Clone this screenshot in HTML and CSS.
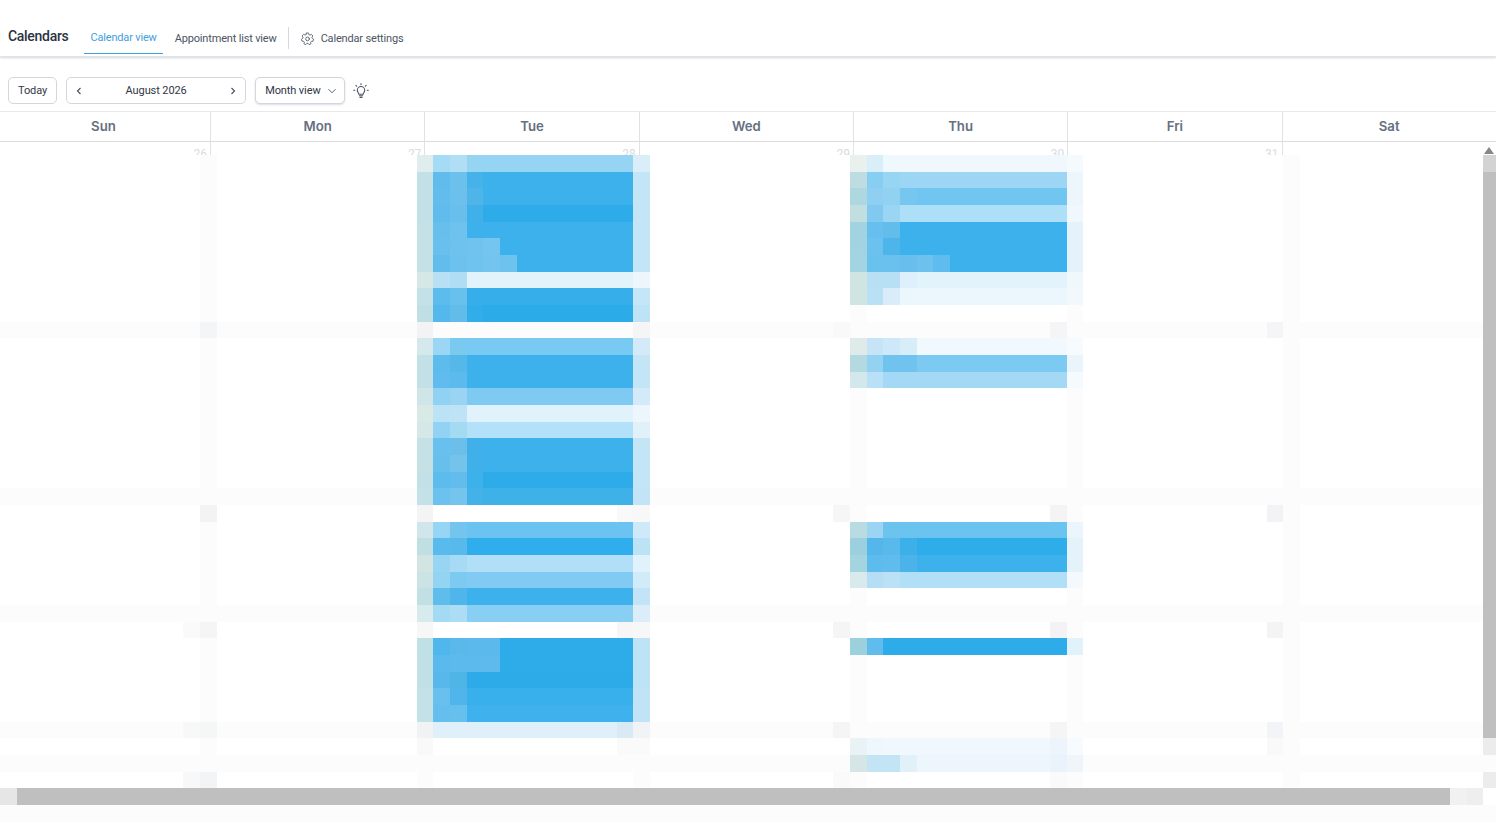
FILE: index.html
```html
<!DOCTYPE html>
<html lang="en">
<head>
    <meta charset="UTF-8" />
    <title>Calendars</title>
    <link rel="stylesheet" href="styles.css">
</head>
<body>
    <header class="topbar">
        <h1 class="page-title">Calendars</h1>
        <nav class="tabs">
            <a class="tab tab-active" href="#">Calendar view</a>
            <a class="tab" href="#">Appointment list view</a>
            <span class="tab-divider"></span>
            <a class="tab tab-settings" href="#">
                <svg class="gear" width="15" height="15" viewBox="0 0 24 24" fill="none" stroke="#5f6773" stroke-width="1.5" stroke-linecap="round" stroke-linejoin="round">
                    <path d="M10.3 3.2h3.4l.5 2.6 1.7.8 2.3-1.3 2.3 2.6-1.4 2.1.4 1.9 2.2 1.3-.9 3.2-2.6.1-1.2 1.5.5 2.5-3.1 1.3-1.5-2.1h-1.9l-1.7 2.1-3-1.4.6-2.5-1.2-1.5-2.6-.1-.9-3.2 2.2-1.3.4-1.9-1.4-2.1 2.3-2.6 2.3 1.3 1.7-.8z" />
                    <circle cx="12" cy="12.6" r="3" />
                </svg>
                Calendar settings
            </a>
        </nav>
    </header>

    <div class="toolbar">
        <button class="btn">Today</button>
        <div class="btn month-nav">
            <svg width="10" height="10" viewBox="0 0 10 10" fill="none" stroke="#4b5563" stroke-width="1.2"><path d="M6.5 2 3.5 5l3 3" /></svg>
            <span>August 2026</span>
            <svg width="10" height="10" viewBox="0 0 10 10" fill="none" stroke="#4b5563" stroke-width="1.2"><path d="M3.5 2l3 3-3 3" /></svg>
        </div>
        <button class="btn view-select">
            Month view
            <svg width="10" height="10" viewBox="0 0 10 10" fill="none" stroke="#5f6773" stroke-width="1"><path d="M1.5 3.2 5 6.8l3.5-3.6" /></svg>
        </button>
        <svg class="bulb" width="16" height="16" viewBox="0 0 16 16" fill="none" stroke="#4b5563" stroke-width="1.1" stroke-linecap="round">
            <path d="M5.9 11.2c0-1.3-1.6-1.9-1.6-4a3.7 3.7 0 0 1 7.4 0c0 2.1-1.6 2.7-1.6 4z" />
            <path d="M6.3 12.8h3.4M7 14.4h2" />
            <path d="M8 .6v1M2.9 2.4l.7.7M13.1 2.4l-.7.7M.7 7.2h1.1M14.2 7.2h1.1" />
        </svg>
    </div>

    <div class="calendar">
        <div class="week-head">
            <div class="day-name">Sun</div>
            <div class="day-name">Mon</div>
            <div class="day-name">Tue</div>
            <div class="day-name">Wed</div>
            <div class="day-name">Thu</div>
            <div class="day-name">Fri</div>
            <div class="day-name">Sat</div>
        </div>
        <div class="month-body">
            <div class="week-row">
                <div class="day-cell">26</div>
                <div class="day-cell">27</div>
                <div class="day-cell">28</div>
                <div class="day-cell">29</div>
                <div class="day-cell">30</div>
                <div class="day-cell">31</div>
                <div class="day-cell"></div>
            </div>
            <!-- blurred part of the page, filled by mosaic.js -->
            <div id="mosaic" class="mosaic"></div>
            <span class="scroll-up"></span>
        </div>
    </div>

    <script src="mosaic.js"></script>
</body>
</html>
```

FILE: styles.css
```css
* {
    box-sizing: border-box;
}
html, body {
    height: 100%;
}
body {
    margin: 0;
    overflow: hidden;
    display: flex;
    flex-direction: column;
    background-color: #fff;
    color: #1f2937;
    font-family: Roboto, "Liberation Sans", sans-serif;
}
.topbar {
    height: 57px;
    flex: none;
    display: flex;
    align-items: flex-end;
    padding-left: 8px;
    border-bottom: 1px solid #dfe2e7;
    box-shadow: 0 1px 2px rgba(80, 90, 110, 0.25);
}
.page-title {
    margin: 0 16px 12px 0;
    font-size: 14px;
    font-weight: 500;
    letter-spacing: -0.3px;
    color: #2a3342;
}
.tabs {
    display: flex;
    align-items: center;
    height: 33px;
    margin-bottom: 2px;
}
.tab {
    display: flex;
    align-items: center;
    height: 33px;
    padding: 2px 6px 0;
    white-space: nowrap;
    color: #4b5563;
    font-size: 11px;
    letter-spacing: -0.17px;
    text-decoration: none;
    border-bottom: 1px solid transparent;
}
.tab-active {
    padding-top: 0;
    margin-right: 6px;
    color: #43a0dc;
    border-bottom-color: #43a0dc;
}
.tab-divider {
    width: 1px;
    height: 22px;
    margin: 0 5px 0 5px;
    background-color: #d5d8dd;
}
.tab-settings {
    gap: 6px;
}
.toolbar {
    height: 54px;
    flex: none;
    display: flex;
    align-items: center;
    gap: 9px;
    padding: 13px 8px 0;
}
.btn {
    height: 27px;
    padding: 0 9px;
    display: flex;
    align-items: center;
    justify-content: space-between;
    background: #fff;
    border: 1px solid #d3d6de;
    border-radius: 5px;
    color: #2f3746;
    font-family: inherit;
    font-size: 11px;
    letter-spacing: -0.1px;
}
.month-nav {
    width: 180px;
    padding: 0 7px;
}
.view-select {
    width: 90px;
    padding-right: 7px;
    box-shadow: 0 1px 2px rgba(80, 90, 110, 0.2);
}
.bulb {
    margin-left: -1px;
}
.calendar {
    flex: 1;
    min-height: 0;
    display: flex;
    flex-direction: column;
    overflow: hidden;
    border-top: 1px solid #e8e8e8;
}
.week-head {
    height: 30px;
    flex: none;
    display: grid;
    grid-template-columns: repeat(7, 1fr);
    width: 1500px;
    margin-left: -3.2px;
    border-bottom: 1px solid #dcdcdc;
}
.day-name {
    display: flex;
    align-items: center;
    justify-content: center;
    padding-bottom: 2px;
    border-right: 1px solid #e2e2e2;
    color: #667080;
    font-family: Inter, sans-serif;
    font-size: 13.2px;
    font-weight: 600;
}
.month-body {
    flex: 1;
    position: relative;
    overflow: hidden;
}
.week-row {
    display: grid;
    grid-template-columns: repeat(7, 1fr);
    width: 1500px;
    height: 40px;
    margin-left: -3.2px;
}
.day-cell {
    padding: 5px 3px 0 0;
    border-right: 1px solid #e2e2e2;
    text-align: right;
    color: #d9dce1;
    font-size: 12px;
}
/* three tracks add up to exactly 50px, so the cells stay on the 16.67px raster */
.mosaic {
    position: absolute;
    top: 13px;
    left: 0;
    display: grid;
    grid-template-columns: repeat(30, 16.672px 16.672px 16.66px);
    grid-template-rows: repeat(14, 16.672px 16.672px 16.66px);
    background-color: #fff;
}
.scroll-up {
    position: absolute;
    top: 5px;
    right: 2px;
    width: 0;
    height: 0;
    border-left: 5px solid transparent;
    border-right: 5px solid transparent;
    border-bottom: 7px solid #868686;
}
```

FILE: mosaic.js
```js
const mosaic = document.getElementById('mosaic');

// each row: row number, then colours left to right, "#abc*9" means nine cells
const TUE_START = 25;
const tueRows = [
    [0, '#dfedef #a6dbf5 #b0def5 #96d4f4*10 #daeef9'],
    [1, '#c2e0e6 #5fbcec #6bc0ec #45b2ea #3db1ec*9 #c3e5f6'],
    [2, '#c2e0e6 #62bdec #6cc0ec #4fb5e8 #3db1ec*9 #c3e5f6'],
    [3, '#c2e0e6 #5fbcec #69bfeb #3fb0ea #2eabe9*9 #c3e5f6'],
    [4, '#c5e1e6 #67bfec #6ec2ed #3db1ec*10 #c3e5f6'],
    [5, '#c5e1e6 #67c0ee #6ec2ee #70c3ef #74c5ef #3db1ec*8 #c3e5f6'],
    [6, '#c5e1e6 #62bdec #6cc2ed #6fc3ef #73c5ef #6ec2ee #3db1ec*7 #c3e5f6'],
    [7, '#d6e8e6 #b8e0f5 #b0dcf4 #e3f3fc*10 #edf6fc'],
    [8, '#c3e1e6 #5cbcec #68c0ec #35aeea*10 #c4e6f7'],
    [9, '#bfdfe4 #55b8ec #62bcea #31adea #2cabe9*9 #bfe3f6'],
    [10, '#f3f3f6 #fcfcfc*12 #f5f5f8'],
    [11, '#d5e9ec #9cd6f5 #79c9f0 #79caf2*10 #d3eaf8'],
    [12, '#c2e0e6 #5cbcec #55b8e8 #3db1ec*10 #c3e5f6'],
    [13, '#c2e0e6 #60bcee #5cbbec #3db1ec*10 #c3e5f6'],
    [14, '#cfe5e8 #8fd2f3 #99d4f3 #7fcaf3*10 #d3eaf9'],
    [15, '#d8e9e6 #bce2f6 #bfe3f6 #e0f2fc*10 #ecf6fc'],
    [16, '#d5e7e6 #92d2f5 #a5daf3 #b3e1f9*10 #e0f1fa'],
    [17, '#c5e1e6 #68c0ee #6cbfea #41b0e8 #3db1ec*9 #c3e5f6'],
    [18, '#c5e1e6 #67c0ec #73c3ea #3fb0ea #3db1eb*9 #c3e5f6'],
    [19, '#c2e0e6 #5cbcee #62bdec #3db1ea #2eacea*9 #c3e5f6'],
    [20, '#c3e1e6 #6cc2ee #75c4ed #42b2e8 #3fb1e9*9 #c2e4f6'],
    [21, '#f4f4f4 #ffffff*11 #f9f9f9 #f8f8f8'],
    [22, '#d0e6ea #97d5f4 #73c5ee #6ac3f0*10 #cee9f9'],
    [23, '#bfdfe3 #59baee #58b9eb #2fadec*10 #bce2f6'],
    [24, '#d3e5e3 #98d5f3 #a7daf5 #b0dff7*10 #e0f2fb'],
    [25, '#cbe3e5 #94d4f3 #7ccaf0 #80caf3*10 #d1ebf9'],
    [26, '#c2e0e4 #5fbdec #4fb5eb #3db1ec*10 #c3e4f6'],
    [27, '#d7eaed #a5daf5 #addcf5 #88cff3*10 #dbedf9'],
    [28, '#f7f7f7 #ffffff*11 #f6f6f6 #f7f7f9'],
    [29, '#bfe0e5 #50b7ec #5ab8ea #5cb9eb #5cb9eb #2eabe9*8 #bfe3f6'],
    [30, '#c0e0e5 #5abaee #5cbaec #5cbaec #5fbaec #2eabe9*8 #bfe3f6'],
    [31, '#c0e0e5 #58b8ec #4fb5e6 #2dabe8*10 #bfe3f6'],
    [32, '#c3e1e6 #68c0ee #4fb5ea #38b0ec*10 #c0e4f6'],
    [33, '#c3e1e6 #64bfee #66bfec #3fb1ec*10 #c0e4f6'],
    [34, '#f1f2f4 #dff0fa*11 #d9eaf4 #f1f4f7'],
    [35, '#f9f9f9 #ffffff*11 #fafafa #fafafa']
];

const THU_START = 51;
const thuRows = [
    [0, '#e9f1ee #d8eff9 #eff8fd #f0f8fe*10 #f5fafd'],
    [1, '#bddde2 #86cff2 #98d5f3 #9bd6f4 #9dd6f5*9 #edf6fc'],
    [2, '#aed8e0 #8fd0f2 #91d2f3 #76c6ef #70c5f1*9 #ecf6fb'],
    [3, '#c1dfe0 #80caf1 #9ad5f3 #addff8*10 #f0f8fd'],
    [4, '#a2d3e0 #66bfef #62bdeb #3db1ec*10 #e4f3f9'],
    [5, '#a2d3e0 #6cc2ee #4db5ea #3db1ec*10 #e4f3f9'],
    [6, '#a3d4e1 #69c1ee #6ac1ee #68bfee #6cc1ed #5fbcee #3db1ec*7 #e4f3f9'],
    [7, '#d0e5e2 #b8e0f5 #b8e0f5 #ddf0fc #e3f3fc*9 #f0f8fb'],
    [8, '#d0e5e2 #b8e1f6 #d8edf9 #ecf6fd*10 #f2f8fb'],
    [11, '#dfebe9 #c5e4f6 #cde8f8 #d7eef9 #f1f9fe*9 #f7fbfd'],
    [12, '#b2dae0 #94d2f2 #6fc3ee #6fc3ee #7ccaf2*9 #e9f5fb'],
    [13, '#d2e8ec #b8e1f7 #a3d9f4 #a3d9f5*10 #f4fafd'],
    [22, '#b8dce2 #9cd5f4 #6cc3ee #6ac4ef*10 #ebf6fc'],
    [23, '#9dd0de #55b6ec #5ab9eb #3db0e9 #2eadea*9 #e4f3fa'],
    [24, '#a3d4e0 #5cbcee #60bcec #4ab4ea #3db1ec*9 #e4f3fa'],
    [25, '#d8eaec #b5def6 #bae1f6 #b0dff7*10 #f3f9fd'],
    [29, '#9cd0dc #5fbcec #2eabe9*11 #e1f2fb'],
    [35, '#e9f2f4 #edf7fc #f0f8fe*10 #edf4fc #f8fbfd'],
    [36, '#d6e6e7 #c3e4f4 #c3e4f4 #e0f1f9 #eef6fd*8 #e9f3fb #eff5f8']
];

// faint month grid that is left of the table lines
const FAINT = '#fcfcfc';
const bandRows = [10, 20, 27, 34, 36, 39];
const lineCols = [12, 25, 38, 51, 64, 77];
// darker crossings: [col, row, colour]
const crossings = [
    [12, 10, '#f3f5f7'], [50, 10, '#f9f9f9'], [63, 10, '#f5f5f7'], [76, 10, '#f5f5f7'],
    [12, 21, '#f3f3f3'], [50, 21, '#f6f6f6'], [63, 21, '#f4f4f6'], [76, 21, '#f3f3f6'],
    [12, 28, '#f5f5f5'], [11, 28, '#fafafa'], [50, 28, '#f5f5f5'], [63, 28, '#f3f3f5'], [76, 28, '#f4f4f4'],
    [11, 34, '#f8f8f8'], [12, 34, '#f5f6f6'], [50, 34, '#f5f5f5'], [63, 34, '#f5f5f6'], [76, 34, '#f3f4f7'],
    [76, 35, '#f9f9f9'],
    [11, 37, '#f8f8f8'], [12, 37, '#f3f4f5'], [50, 37, '#fafafa'], [63, 37, '#fafafa']
];

function addTile(col, row, span, color) {
    const tile = document.createElement('div');
    tile.style.gridColumn = `${col + 1} / span ${span}`;
    tile.style.gridRow = `${row + 1}`;
    tile.style.backgroundColor = color;
    mosaic.appendChild(tile);
}

function addRows(rows, startCol) {
    rows.forEach(([row, spec]) => {
        let col = startCol;
        spec.split(' ').forEach(part => {
            const [color, count] = part.split('*');
            const span = parseInt(count || '1', 10);
            addTile(col, row, span, color);
            col += span;
        });
    });
}

bandRows.forEach(row => addTile(0, row, 90, FAINT));
lineCols.forEach(col => {
    const tile = document.createElement('div');
    tile.style.gridColumn = `${col + 1}`;
    tile.style.gridRow = '1 / span 38';
    tile.style.backgroundColor = FAINT;
    mosaic.appendChild(tile);
});
crossings.forEach(([col, row, color]) => addTile(col, row, 1, color));

addRows(tueRows, TUE_START);
addRows(thuRows, THU_START);

// scrollbars
addTile(89, 0, 1, '#d3d3d3');
for (let row = 1; row < 35; row++) addTile(89, row, 1, '#bfbfbf');
addTile(89, 35, 1, '#ececec');
addTile(89, 37, 1, '#ececec');
addTile(0, 38, 1, '#e6e6e6');
addTile(1, 38, 86, '#bfbfbf');
addTile(87, 38, 1, '#f1f1f1');
addTile(88, 38, 1, '#eeeeee');
```
